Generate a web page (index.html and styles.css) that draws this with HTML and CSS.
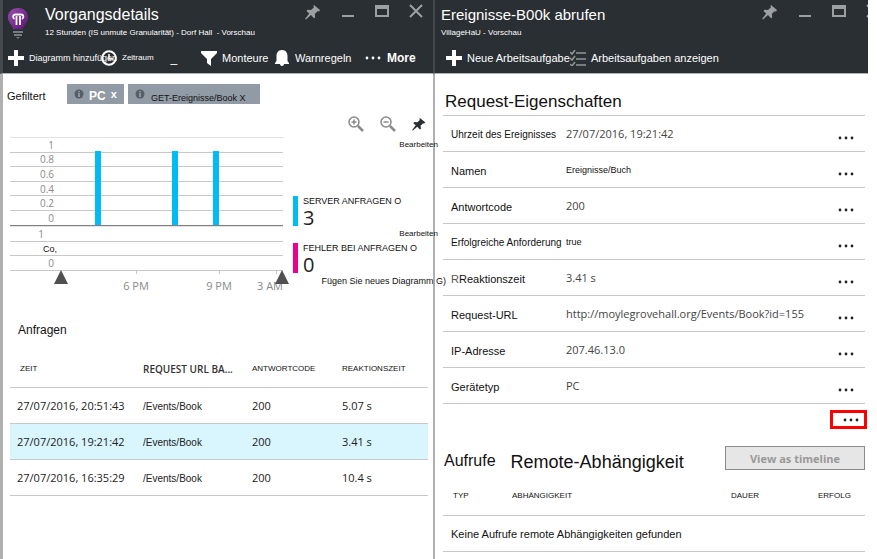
FILE: index.html
```html
<!DOCTYPE html>
<html lang="de">
<head>
<meta charset="utf-8">
<title>Vorgangsdetails</title>
<link rel="stylesheet" href="styles.css">
</head>
<body>
<svg class="defs" aria-hidden="true">
  <symbol id="pin" viewBox="0 0 16 16"><path d="M9 1l6 5-1 1.500-1.500-.2-2.700 2.700.4 3.500-1.200.8-3-3.200L1 15.500 0 15l4.200-5.500L1.500 7l1-1.200 3.500.2 3-2.700-.6-1.300z"/></symbol>
  <symbol id="dots" viewBox="0 0 16 4"><circle cx="2" cy="2" r="1.400"/><circle cx="8" cy="2" r="1.400"/><circle cx="14" cy="2" r="1.400"/></symbol>
  <symbol id="plus" viewBox="0 0 16 16"><path d="M6 0h4v6h6v4h-6v6H6v-6H0V6h6z"/></symbol>
  <symbol id="min" viewBox="0 0 14 14"><path d="M1 11h12v2H1z"/></symbol>
  <symbol id="max" viewBox="0 0 14 14"><path fill-rule="evenodd" d="M0 1h14v12H0zM2 5v6h10V5z"/></symbol>
  <symbol id="close" viewBox="0 0 14 14"><path d="M1 1l12 12M13 1L1 13" stroke="currentColor" stroke-width="2"/></symbol>
  <symbol id="info" viewBox="0 0 10 10"><circle cx="5" cy="5" r="4.500" fill="#565e66"/><path d="M4.500 2h1v1.200h-1zM4.500 4h1v4h-1z" fill="#c3cad0"/></symbol>
</svg>

<section class="blade">
  <header class="head">
    <div class="top">
      <svg class="bulb" viewBox="0 0 20 32"><defs><linearGradient id="g" x1="0" y1="0" x2="1" y2="1"><stop offset="0" stop-color="#9a4fae"/><stop offset="1" stop-color="#5c1377"/></linearGradient></defs><path fill="url(#g)" d="M10 0c6 0 10 4 10 9 0 4-2 6-3.500 8.500-1 1.500-1.500 3-1.500 3.500H5c0-1-.5-2-1.500-3.500C2 15 0 13 0 9c0-5 4-9 10-9z"/><path fill="none" stroke="#fff" stroke-width="1.800" d="M8.500 17V8m3.500 9V8M6.500 11C4.500 10 4.500 6.500 7.500 6.500h5.500c3 0 3 3.500 1 4.500"/><path fill="#777c80" d="M5 23h10v2H5zM6 26h8v2H6zM8 29h4l-2 2z"/></svg>
      <div class="titles"><h1>Vorgangsdetails</h1><p>12 Stunden (IS unmute Granularität) - Dorf Hall&nbsp; - Vorschau</p></div>
      <div class="window">
        <button aria-label="Anheften"><svg class="i16"><use href="#pin"/></svg></button>
        <button aria-label="Minimieren"><svg class="i14"><use href="#min"/></svg></button>
        <button aria-label="Maximieren"><svg class="i14"><use href="#max"/></svg></button>
        <button aria-label="Schließen"><svg class="i14"><use href="#close"/></svg></button>
      </div>
    </div>
    <nav class="tools tools-main">
      <button><svg class="i16"><use href="#plus"/></svg><span class="t9">Diagramm hinzufügen</span></button>
      <button><svg class="i16" viewBox="0 0 16 16"><circle cx="8" cy="8" r="6.800" fill="none" stroke="#fff" stroke-width="2"/><path d="M8 4v5h4" fill="none" stroke="#fff" stroke-width="1.500"/></svg><span class="t8">Zeitraum</span><span class="under">_</span></button>
      <button><svg class="i16" viewBox="0 0 16 16"><path d="M0 1h16v2l-6 6v7l-4-3V9L0 3z"/></svg><span class="t11">Monteure</span></button>
      <button><svg class="i16" viewBox="0 0 16 16"><path d="M8 0c4 0 5.500 3 5.500 6v5l1.500 2v1h-5a2 2 0 0 1-4 0H1v-1l1.500-2V6C2.500 3 4 0 8 0z"/></svg><span class="t11">Warnregeln</span></button>
      <button><svg class="dots"><use href="#dots"/></svg><strong class="t12">More</strong></button>
    </nav>
  </header>
  <main class="body">
    <div class="filters">
      <span class="t11">Gefiltert</span>
      <button class="tag tag-pc"><svg class="i10"><use href="#info"/></svg><b>PC</b><b class="x">x</b></button>
      <button class="tag tag-url"><svg class="i10"><use href="#info"/></svg><span>GET-Ereignisse/Book X</span></button>
    </div>
    <div class="monitor">
      <svg class="chart" viewBox="10 134 280 160" role="img" aria-label="Serveranfragen">
        <path stroke="#e2e2e2" d="M10 137.500h273M10 226.500h273"/>
        <path stroke="#c8c8c8" d="M10 152.500h273M10 166.500h273M10 181.500h273M10 195.500h273M10 210.500h273M10 241.500h273M10 255.500h273M10 270.500h273M136.500 270v4M219.500 270v4M276.500 270v4"/>
        <path fill="#00bcf2" d="M95 151h6v74h-6zM172 151h6v74h-6zM213 151h6v74h-6z"/>
        <path stroke="#808080" d="M10 225.500h273"/>
        <g class="axis" text-anchor="end"><text x="54" y="149">1</text><text x="54" y="163">0.8</text><text x="54" y="178">0.6</text><text x="54" y="193">0.4</text><text x="54" y="207">0.2</text><text x="54" y="222">0</text><text x="44" y="238">1</text><text x="54" y="267">0</text></g>
        <text class="co" x="43" y="252">Co,</text>
        <g class="axis time" text-anchor="middle"><text x="136" y="290">6 PM</text><text x="219" y="290">9 PM</text><text x="270" y="290">3 AM</text></g>
        <path fill="#505050" d="M61 270l7 14H54zM282 270l7 14h-14z"/>
      </svg>
      <div class="legend">
        <div class="zoom">
          <button aria-label="Vergrößern"><svg class="i16" viewBox="0 0 16 16"><g fill="none" stroke="#8a8a8a"><circle cx="6" cy="6" r="5" stroke-width="1.500"/><path d="M6 3.500v5M3.500 6h5" stroke-width="1.500"/><path d="M10 10l5 5" stroke-width="2.500"/></g></svg></button>
          <button aria-label="Verkleinern"><svg class="i16" viewBox="0 0 16 16"><g fill="none" stroke="#8a8a8a"><circle cx="6" cy="6" r="5" stroke-width="1.500"/><path d="M3.500 6h5" stroke-width="1.500"/><path d="M10 10l5 5" stroke-width="2.500"/></g></svg></button>
          <button aria-label="Anheften"><svg class="i14"><use href="#pin"/></svg></button>
        </div>
        <a class="edit" href="#">Bearbeiten</a>
        <div class="metric metric-server"><span>SERVER ANFRAGEN O</span><b>3</b></div>
        <a class="edit edit-second" href="#">Bearbeiten</a>
        <div class="metric metric-fail"><span>FEHLER BEI ANFRAGEN O</span><b>0</b></div>
        <a class="add" href="#">Fügen Sie neues Diagramm G)</a>
      </div>
    </div>
    <h2 class="sub">Anfragen</h2>
    <table class="requests">
      <colgroup><col class="c-time"><col class="c-url"><col class="c-code"><col></colgroup>
      <thead><tr><th class="first">ZEIT</th><th class="strong">REQUEST URL BA...</th><th>ANTWORTCODE</th><th>REAKTIONSZEIT</th></tr></thead>
      <tbody>
        <tr><td>27/07/2016, 20:51:43</td><td class="url">/Events/Book</td><td>200</td><td>5.07 s</td></tr>
        <tr class="selected"><td>27/07/2016, 19:21:42</td><td class="url">/Events/Book</td><td>200</td><td>3.41 s</td></tr>
        <tr><td>27/07/2016, 16:35:29</td><td class="url">/Events/Book</td><td>200</td><td>10.4 s</td></tr>
      </tbody>
    </table>
  </main>
</section>

<section class="blade blade-detail">
  <header class="head">
    <div class="top">
      <div class="titles"><h1>Ereignisse-B00k abrufen</h1><p>VillageHaU - Vorschau</p></div>
      <div class="window">
        <button aria-label="Anheften"><svg class="i16"><use href="#pin"/></svg></button>
        <button aria-label="Minimieren"><svg class="i14"><use href="#min"/></svg></button>
        <button aria-label="Maximieren"><svg class="i14"><use href="#max"/></svg></button>
        <button aria-label="Schließen"><svg class="i14"><use href="#close"/></svg></button>
      </div>
    </div>
    <nav class="tools tools-detail">
      <button><svg class="i16"><use href="#plus"/></svg><span class="t11">Neue Arbeitsaufgabe</span></button>
      <button><svg class="i16" viewBox="0 0 16 16"><path fill="none" stroke="#92979a" stroke-width="1.500" d="M0 2l2 2 3-4M0 8l2 2 3-4M0 14l2 2 3-4M6 3h10M6 9h10M6 15h10"/></svg><span class="t11">Arbeitsaufgaben anzeigen</span></button>
    </nav>
  </header>
  <div class="body">
    <h2 class="title">Request-Eigenschaften</h2>
    <table class="props">
      <colgroup><col class="c-name"><col><col class="c-more"></colgroup>
      <tr><th class="t10">Uhrzeit des Ereignisses</th><td>27/07/2016, 19:21:42</td><td><button aria-label="Mehr"><svg class="dots"><use href="#dots"/></svg></button></td></tr>
      <tr><th>Namen</th><td class="plain">Ereignisse/Buch</td><td><button aria-label="Mehr"><svg class="dots"><use href="#dots"/></svg></button></td></tr>
      <tr><th>Antwortcode</th><td>200</td><td><button aria-label="Mehr"><svg class="dots"><use href="#dots"/></svg></button></td></tr>
      <tr><th class="t10">Erfolgreiche Anforderung</th><td class="plain">true</td><td><button aria-label="Mehr"><svg class="dots"><use href="#dots"/></svg></button></td></tr>
      <tr><th><span class="ghost">R</span>Reaktionszeit</th><td>3.41 s</td><td><button aria-label="Mehr"><svg class="dots"><use href="#dots"/></svg></button></td></tr>
      <tr><th>Request-URL</th><td>http://moylegrovehall.org/Events/Book?id=155</td><td><button aria-label="Mehr"><svg class="dots"><use href="#dots"/></svg></button></td></tr>
      <tr><th>IP-Adresse</th><td>207.46.13.0</td><td><button aria-label="Mehr"><svg class="dots"><use href="#dots"/></svg></button></td></tr>
      <tr><th>Gerätetyp</th><td>PC</td><td><button aria-label="Mehr"><svg class="dots"><use href="#dots"/></svg></button></td></tr>
    </table>
    <button class="marked" aria-label="Alle Eigenschaften"><svg class="dots"><use href="#dots"/></svg></button>
    <div class="remote">
      <h2><span>Aufrufe</span> <span class="big">Remote-Abhängigkeit</span></h2>
      <button class="timeline" disabled>View as timeline</button>
    </div>
    <table class="calls">
      <colgroup><col class="c-type"><col><col class="c-dur"><col class="c-ok"></colgroup>
      <thead><tr><th>TYP</th><th>ABHÄNGIGKEIT</th><th>DAUER</th><th>ERFOLG</th></tr></thead>
      <tbody><tr><td colspan="4">Keine Aufrufe remote Abhängigkeiten gefunden</td></tr></tbody>
    </table>
  </div>
</section>
</body>
</html>
```
FILE: styles.css
```css
* { box-sizing: border-box; }
body {
  margin: 0;
  padding-right: 9px;
  min-height: 100vh;
  display: grid;
  grid-template-columns: 433fr 435fr;
  background: #fff;
  color: #111;
  font: 12px/16px "Liberation Sans", Arial, sans-serif;
}
h1, h2, p { margin: 0; font-weight: 400; }
button { margin: 0; padding: 0; border: 0; background: none; color: inherit; font: inherit; }
a { color: inherit; text-decoration: none; }
svg { display: block; flex: none; fill: currentColor; }
table { width: 100%; border-collapse: separate; border-spacing: 0; table-layout: fixed; }
th, td { padding: 0 0 0 7px; text-align: left; font-weight: 400; white-space: nowrap; }
.defs { position: absolute; width: 0; height: 0; }
.i16 { width: 16px; height: 16px; }
.i14 { width: 14px; height: 14px; }
.i10 { width: 10px; height: 10px; }
.dots { width: 16px; height: 4px; }
.t8 { font-size: 8px; }
.t9 { font-size: 9px; }
.t11 { font-size: 11px; }
.t12 { font-size: 12px; }

.blade { display: flex; flex-direction: column; min-width: 0; }
.head {
  height: 74px;
  padding-left: 5px;
  overflow: hidden;
  background: #2a2f33;
  color: #fff;
  border-left: 3px solid #45494d;
  border-bottom: 1px solid #b0b0b0;
}
.body { flex: 1; padding: 10px 5px 0 7px; border-left: 3px solid #b0b0b0; }
.blade-detail .head { border-left-width: 2px; padding-left: 6px; }
.blade-detail .body { border-left-width: 2px; padding: 18px 3px 0 8px; }

.top { display: flex; height: 50px; }
.bulb { width: 20px; height: 32px; margin: 8px 17px 0 0; }
.titles { flex: 1; min-width: 0; padding-top: 5px; white-space: nowrap; }
.titles h1 { font-size: 16px; line-height: 20px; }
.blade-detail h1 { font-size: 15px; }
.titles p { font-size: 8px; line-height: 16px; }
.window { display: flex; gap: 20px; margin-right: 10px; padding-top: 4px; align-items: flex-start; color: #9da0a3; }
.blade-detail .window { margin-right: -12px; }
.tools { display: grid; height: 16px; }
.tools button { display: flex; align-items: center; gap: 5px; white-space: nowrap; min-width: 0; }
.tools .dots { margin-right: 1px; }
.tools-main { grid-template-columns: 93px 100px 73px 91px auto; }
.tools-detail { grid-template-columns: 124px auto; padding-left: 5px; }
.under { margin-left: 12px; }

.filters { display: flex; height: 20px; gap: 4px; margin-left: -3px; }
.filters > span { width: 56px; line-height: 24px; }
.tag { display: flex; align-items: center; gap: 6px; padding: 0 7px; background: #919ba6; }
.tag-pc { width: 57px; gap: 5px; color: #fff; }
.tag-pc b { padding-top: 4px; }
.tag-pc .x { padding-top: 0; font-size: 11px; }
.tag-url { width: 132px; font-size: 9px; white-space: nowrap; color: #111; }
.tag-url span { padding-top: 8px; }
.monitor { display: grid; grid-template-columns: 280px 1fr; gap: 3px; }
.chart { width: 100%; height: 160px; margin-top: 30px; }
.axis { font: 10px "Open Sans", sans-serif; fill: #8a8a8a; }
.time { font-size: 11px; }
.co { font-size: 9px; fill: #111; }
.legend { position: relative; z-index: 1; padding-top: 10px; white-space: nowrap; }
.zoom { display: flex; justify-content: flex-end; align-items: center; gap: 16px; height: 20px; margin-right: 2px; color: #2a2f33; }
.edit { display: block; margin: 5px -10px 0 0; font-size: 8px; line-height: 12px; text-align: right; }
.edit-second { margin-top: 2px; }
.metric { height: 30px; margin-top: 45px; padding-left: 5px; border-left: 5px solid #00bcf2; }
.metric span { display: block; font-size: 9px; line-height: 10px; }
.metric b { display: block; font: 20px/24px "Open Sans", sans-serif; color: #222; }
.metric-fail { margin-top: 3px; border-color: #ec008c; }
.add { display: block; margin: 2px -18px 0 0; font-size: 9px; line-height: 12px; text-align: right; }

.sub { margin: 28px 0 12px 8px; font-size: 12px; line-height: 16px; }
.requests th, .requests td { height: 36px; border-bottom: 1px solid #c8c8c8; }
.requests th { height: 38px; font-size: 8px; }
.requests .first { padding-left: 10px; }
.requests .strong { font: 600 10px "Open Sans", sans-serif; color: #333; }
.requests td { font-family: "Open Sans", sans-serif; font-size: 11px; color: #222; }
.requests .url { padding-top: 2px; font: 10px "Liberation Sans", sans-serif; }
.requests .selected td { background: #d9f5fd; }
.c-time { width: 126px; }
.c-url { width: 109px; }
.c-code { width: 90px; }

.title { margin: 0 0 3px 2px; font-size: 17px; line-height: 20px; }
.props { border-bottom: 1px solid #c8c8c8; }
.props th, .props td { height: 36px; border-top: 1px solid #c8c8c8; }
.props th { padding: 2px 0 0 8px; font-size: 11px; }
.props .t10 { font-size: 10px; }
.props td { padding: 0; font-family: "Open Sans", sans-serif; font-size: 11px; color: #444; }
.props .plain { font: 9px "Liberation Sans", sans-serif; color: #111; }
.props button { display: block; padding-top: 9px; color: #222; }
.ghost { color: #555; }
.c-name { width: 123px; }
.c-more { width: 27px; }
.marked { display: flex; align-items: center; justify-content: flex-end; width: 37px; height: 19px; margin: 6px -2px 0 auto; padding-right: 5px; border: 3px solid #f00; color: #222; }
.remote { display: flex; justify-content: space-between; height: 24px; margin-top: 17px; }
.remote h2 { display: flex; gap: 15px; margin-left: 1px; font-size: 16px; line-height: 30px; white-space: nowrap; }
.remote .big { font-size: 18px; line-height: 32px; }
.timeline { width: 140px; border: 1px solid #8a8a8a; background: #e6e6e6; color: #999; font: 700 11px "Open Sans", sans-serif; }
.calls { margin-top: 7px; }
.calls th, .calls td { height: 36px; padding-left: 8px; border-bottom: 1px solid #c8c8c8; font-size: 11px; }
.calls th { height: 39px; padding-left: 10px; font-size: 8px; }
.c-type { width: 59px; }
.c-dur { width: 87px; }
.c-ok { width: 57px; }
```
